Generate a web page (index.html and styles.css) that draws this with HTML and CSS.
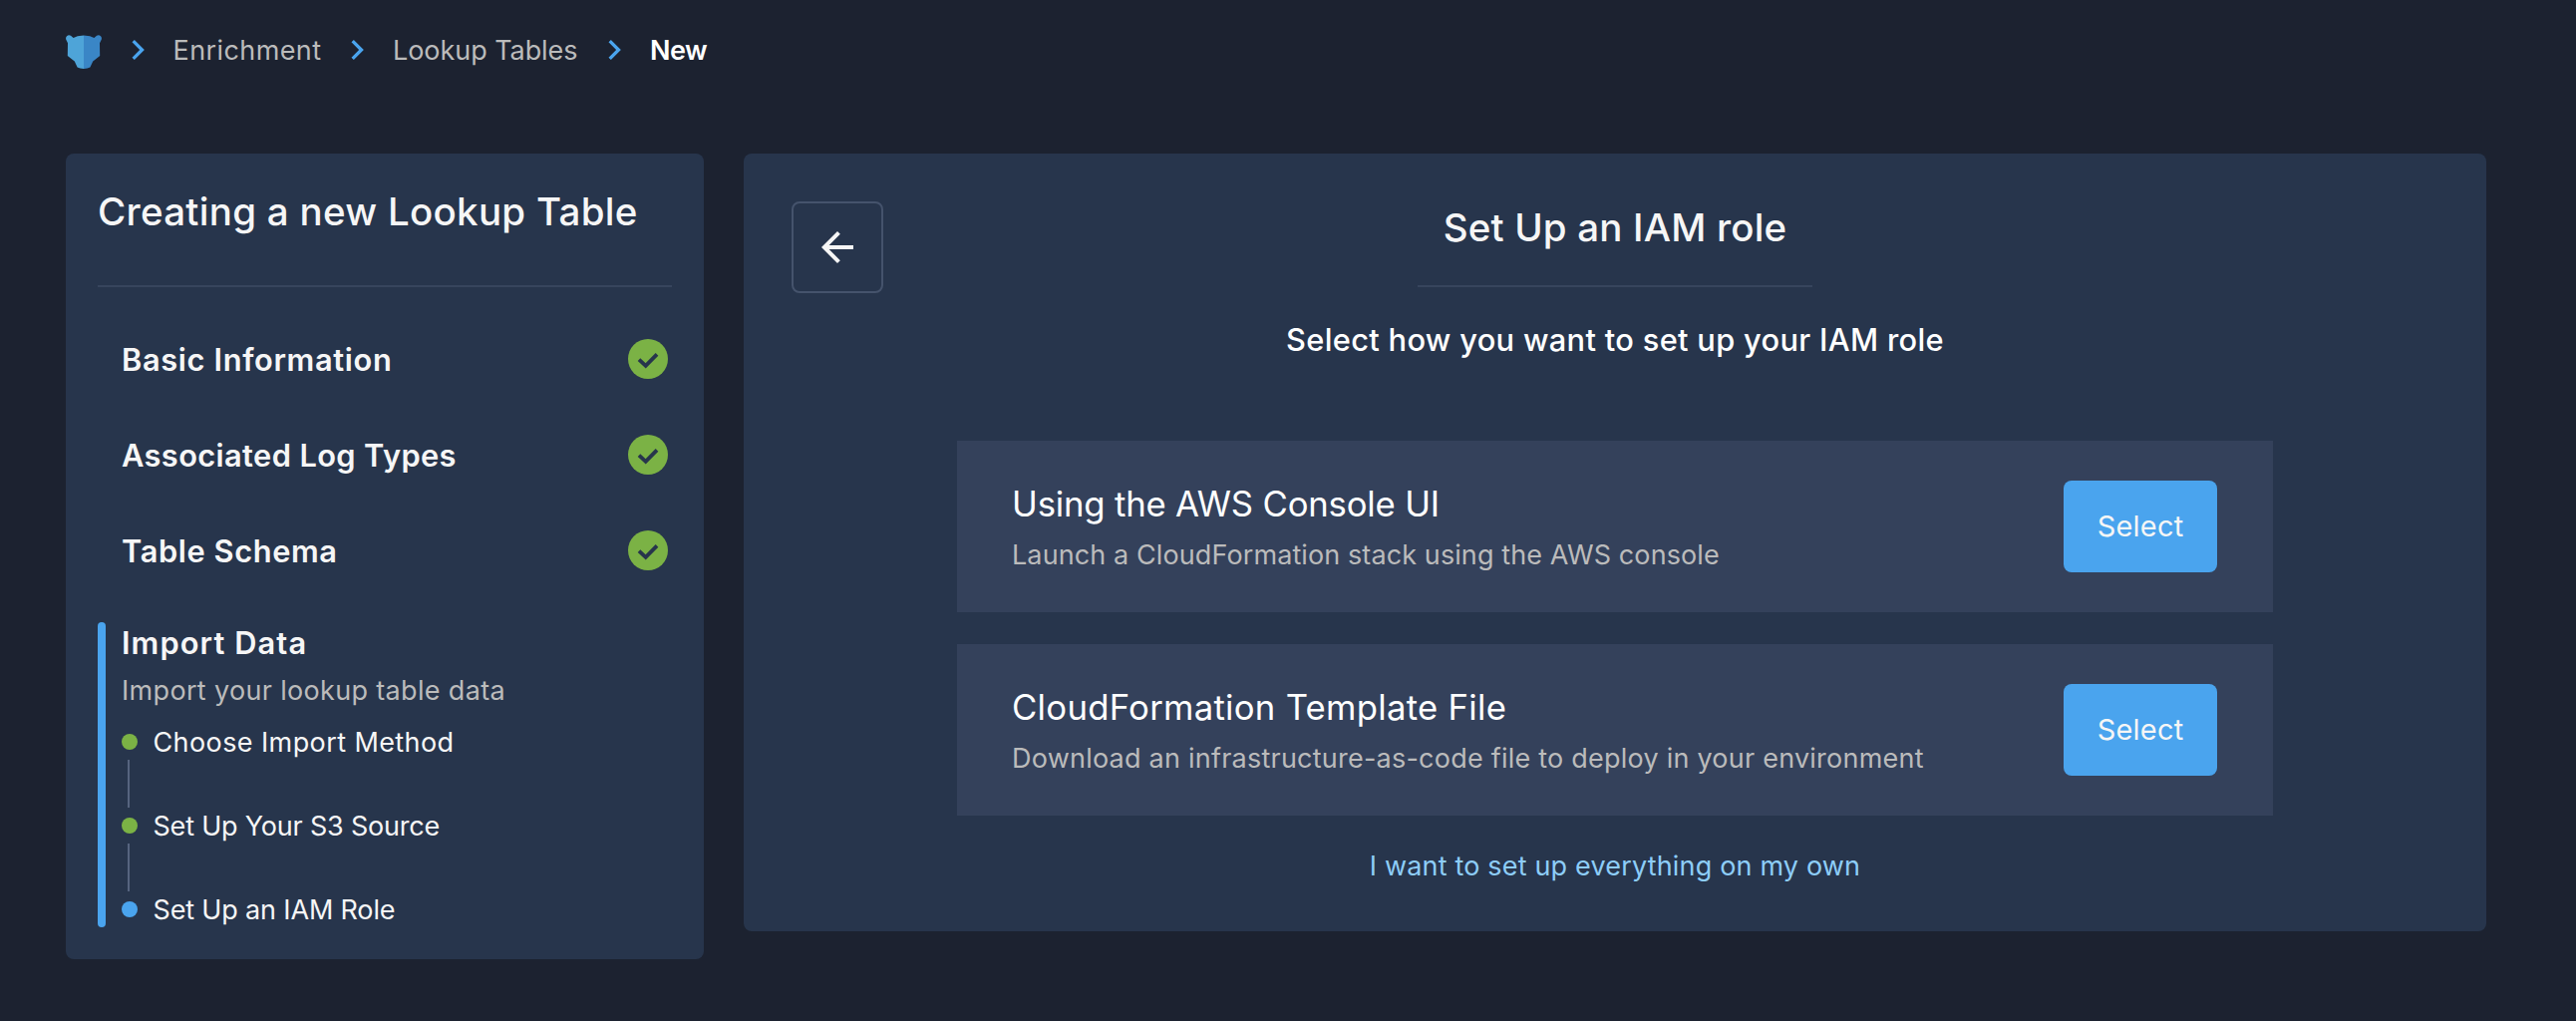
FILE: index.html
```
<!DOCTYPE html>
<html lang="en">
<head>
<meta charset="utf-8">
<title>New Lookup Table</title>
<link rel="stylesheet" href="styles.css">
</head>
<body>
<svg class="defs" aria-hidden="true">
  <symbol id="chevron" viewBox="0 0 14.5 20"><path d="M3.85 0 1.5 2.35 9.13 10 1.5 17.65 3.85 20 13.85 10z"/></symbol>
  <symbol id="done" viewBox="0 0 40 40"><circle cx="20" cy="20" r="20" fill="#7bb245"/><path d="M11 20.6l6.7 6.2L29 15.4" fill="none" stroke="#27354c" stroke-width="3.8"/></symbol>
</svg>
<nav class="breadcrumbs">
  <svg class="logo" viewBox="0 0 36 34">
    <path fill="#4ea4d8" d="M18 .6 11.8 1.2 7.6 2.9 5 .8Q2.800-.5 1 1.200-.3 2.600.2 4.600L2 8.200 1.800 21 8.800 26.600 11.600 32.600Q14 34 18 34z"/>
    <path fill="#3a86c6" d="M18 .6 24.200 1.200 28.400 2.900 31 .8Q33.200-.5 35 1.200 36.300 2.600 35.800 4.600L34 8.200 34.200 21 27.200 26.600 24.400 32.600Q22 34 18 34z"/>
  </svg>
  <svg class="chevron"><use href="#chevron"/></svg>
  <a class="crumb crumb-enrichment">Enrichment</a>
  <svg class="chevron"><use href="#chevron"/></svg>
  <a class="crumb crumb-tables">Lookup Tables</a>
  <svg class="chevron"><use href="#chevron"/></svg>
  <span class="crumb crumb-current">New</span>
</nav>
<main class="layout">
  <aside class="panel sidebar">
    <h1 class="sidebar-title">Creating a new Lookup Table</h1>
    <ul class="steps">
      <li class="step"><span class="step-name basic">Basic Information</span><svg class="done"><use href="#done"/></svg></li>
      <li class="step"><span class="step-name log-types">Associated Log Types</span><svg class="done"><use href="#done"/></svg></li>
      <li class="step"><span class="step-name schema">Table Schema</span><svg class="done"><use href="#done"/></svg></li>
    </ul>
    <section class="current">
      <div class="bar"></div>
      <div class="current-body">
        <h2 class="current-title">Import Data</h2>
        <p class="current-text">Import your lookup table data</p>
        <div class="substep first"><i class="dot"></i><span class="label choose">Choose Import Method</span></div>
        <div class="connector"></div>
        <div class="substep"><i class="dot"></i><span class="label source">Set Up Your S3 Source</span></div>
        <div class="connector"></div>
        <div class="substep"><i class="dot active"></i><span class="label role">Set Up an IAM Role</span></div>
      </div>
    </section>
  </aside>
  <section class="panel content">
    <header class="content-header">
      <button class="back" aria-label="Back"><svg viewBox="0 0 24 24"><path d="M20 11H7.830l5.590-5.590L12 4l-8 8 8 8 1.410-1.410L7.830 13H20v-2z"/></svg></button>
      <h2 class="content-title">Set Up an IAM role</h2>
    </header>
    <p class="subtitle">Select how you want to set up your IAM role</p>
    <div class="options">
      <article class="option">
        <div class="option-text">
          <h3 class="option-title console">Using the AWS Console UI</h3>
          <p class="option-desc console-desc">Launch a CloudFormation stack using the AWS console</p>
        </div>
        <button class="select">Select</button>
      </article>
      <article class="option">
        <div class="option-text">
          <h3 class="option-title template">CloudFormation Template File</h3>
          <p class="option-desc template-desc">Download an infrastructure-as-code file to deploy in your environment</p>
        </div>
        <button class="select">Select</button>
      </article>
    </div>
    <a class="own">I want to set up everything on my own</a>
  </section>
</main>
</body>
</html>
```
FILE: styles.css
```
* { box-sizing: border-box; margin: 0; padding: 0; }
body {
  min-height: 1024px;
  background: #1c2230;
  color: #f6f6f6;
  font-family: Inter, "Open Sans", sans-serif;
  font-size: 27px;
  overflow: hidden;
}
.defs { display: none; }
button { font: inherit; color: inherit; }

.breadcrumbs {
  display: flex;
  align-items: center;
  gap: 28.5px;
  height: 100px;
  padding-left: 66px;
}
.logo { width: 36px; height: 34px; margin-top: 4px; }
.chevron { flex: none; width: 14.5px; height: 20px; fill: #4aa4ee; }
.crumb { color: #bbbbbb; line-height: 40px; white-space: nowrap; margin-top: 2px; }
.crumb-enrichment { width: 149px; letter-spacing: .41px; }
.crumb-tables { width: 186.5px; letter-spacing: -.06px; }
.crumb-current { color: #fff; font-weight: 600; letter-spacing: -.5px; }

.layout { display: flex; align-items: flex-start; gap: 40px; padding: 54px 0 0 66px; }
.panel { background: #27354c; border-radius: 8px; }
.sidebar { width: 640px; padding: 0 32px 32px; }
.sidebar-title {
  padding: 28px 0 44px;
  border-bottom: 2px solid #37455d;
  font-size: 38.5px;
  font-weight: 500;
  line-height: 60px;
  letter-spacing: .28px;
  white-space: nowrap;
}
.steps { list-style: none; padding-top: 24px; }
.step {
  display: flex;
  align-items: center;
  justify-content: space-between;
  height: 96px;
  padding: 0 4px 0 24px;
}
.step-name { font-size: 30.8px; font-weight: 600; line-height: 40px; margin-top: 2px; }
.basic { letter-spacing: .64px; }
.log-types { letter-spacing: .38px; }
.schema { letter-spacing: .6px; }
.done { width: 40px; height: 40px; }

.current { display: flex; gap: 16px; margin-top: 24px; }
.bar { width: 8px; border-radius: 4px; background: #4aa4ee; }
.current-title { font-size: 30.8px; font-weight: 600; line-height: 42px; letter-spacing: 1.09px; }
.current-text { padding-top: 1px; color: #bbbbbb; line-height: 52px; letter-spacing: .33px; }
.substep { display: flex; align-items: center; gap: 15.5px; height: 36px; line-height: 36px; }
.first { margin-top: 7px; }
.label { padding-top: 2px; }
.dot { width: 16px; height: 16px; border-radius: 50%; background: #7bb245; }
.active { background: #4aa4ee; }
.connector { width: 2px; height: 48px; margin-left: 6px; background: #56647f; }
.choose { letter-spacing: .4px; }
.source { letter-spacing: -.2px; }
.role { letter-spacing: -.16px; }

.content { width: 1748px; padding: 48px 48px 46px; }
.content-header { display: grid; grid-template-columns: 92px 1fr 92px; height: 92px; }
.back {
  display: grid;
  place-items: center;
  width: 92px;
  height: 92px;
  border: 2px solid #45536c;
  border-radius: 8px;
  background: none;
}
.back svg { width: 48px; height: 48px; fill: #f6f6f6; }
.content-title {
  justify-self: center;
  width: 396px;
  height: 86px;
  border-bottom: 2px solid #37455d;
  font-size: 38.5px;
  font-weight: 500;
  line-height: 52px;
  letter-spacing: .17px;
  text-align: center;
}
.subtitle {
  margin-top: 27px;
  color: #fff;
  font-size: 30.8px;
  font-weight: 500;
  line-height: 40px;
  letter-spacing: .32px;
  text-align: center;
}
.options { display: flex; flex-direction: column; gap: 32px; width: 1320px; margin: 81px auto 0; }
.option {
  display: flex;
  align-items: center;
  justify-content: space-between;
  height: 172px;
  padding: 0 56px 0 55px;
  background: #34415b;
}
.option-text { padding-top: 6px; }
.option-title { color: #fff; font-size: 34.7px; font-weight: 400; line-height: 50px; }
.option-desc { color: #bbbbbb; padding-top: 1px; line-height: 51px; }
.console { letter-spacing: -.18px; }
.console-desc { letter-spacing: .1px; }
.template { letter-spacing: .28px; }
.template-desc { letter-spacing: .23px; }
.select {
  width: 154px;
  height: 92px;
  padding-bottom: 2px;
  border: 0;
  border-radius: 8px;
  background: #4aa4ee;
  font-size: 29px;
  letter-spacing: .2px;
}
.own {
  display: block;
  margin-top: 31px;
  margin-bottom: -1px;
  color: #8dcdf8;
  line-height: 40px;
  letter-spacing: .17px;
  text-align: center;
}
```
